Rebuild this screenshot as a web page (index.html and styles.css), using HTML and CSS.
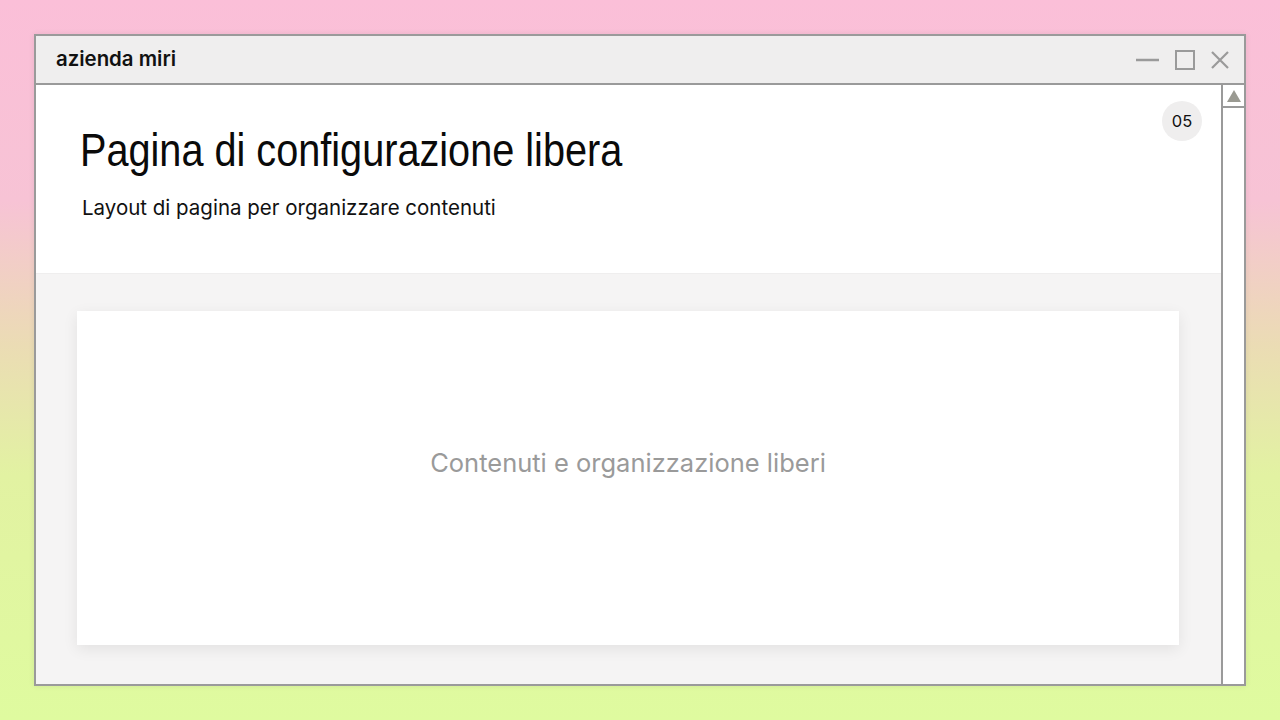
FILE: index.html
```html
<!DOCTYPE html>
<html lang="it">
<head>
<meta charset="utf-8">
<title>azienda miri</title>
<link rel="stylesheet" href="styles.css">
</head>
<body>
<div class="stage">
  <div class="window">
    <div class="titlebar">
      <span class="app-name">azienda miri</span>
      <div class="controls">
        <svg class="ctl ctl-min" width="23" height="20" viewBox="0 0 23 20"><line x1="0" y1="10" x2="23" y2="10" stroke="#9a9a9a" stroke-width="2.5"/></svg>
        <svg class="ctl" width="20" height="20" viewBox="0 0 20 20"><rect x="1" y="1" width="18" height="18" fill="none" stroke="#9a9a9a" stroke-width="2"/></svg>
        <svg class="ctl" width="20" height="20" viewBox="0 0 20 20"><path d="M2 2 L18 18 M18 2 L2 18" stroke="#9a9a9a" stroke-width="2.2"/></svg>
      </div>
    </div>
    <div class="body">
      <div class="content">
        <header class="page-head">
          <h1 class="title">Pagina di configurazione libera</h1>
          <p class="subtitle">Layout di pagina per organizzare contenuti</p>
          <span class="badge">05</span>
        </header>
        <section class="area">
          <div class="card">
            <span class="placeholder">Contenuti e organizzazione liberi</span>
          </div>
        </section>
      </div>
      <div class="scrollbar">
        <div class="scroll-btn">
          <svg width="16" height="14" viewBox="0 0 16 14"><polygon points="8,1 15,13 1,13" fill="#9a9a92"/></svg>
        </div>
      </div>
    </div>
  </div>
</div>
</body>
</html>
```
FILE: styles.css
```css
* { box-sizing: border-box; }
html, body { margin: 0; padding: 0; }
body {
  width: 1280px;
  height: 720px;
  overflow: hidden;
  font-family: "Inter", "Noto Sans", sans-serif;
}
.stage {
  width: 1280px;
  height: 720px;
  padding: 34px 34px 0 34px;
  background: linear-gradient(180deg, #fbbfd8 0%, #f7c3d5 28%, #ebdcb4 48%, #e2f2a2 66%, #dffb9f 100%);
}
.window {
  width: 1212px;
  height: 652px;
  border: 2px solid #9a9a9a;
  background: #fff;
  display: flex;
  flex-direction: column;
  box-shadow: 0 0 6px rgba(0,0,0,0.08);
}
.titlebar {
  height: 49px;
  flex: none;
  background: #efeeee;
  border-bottom: 2px solid #9a9a9a;
  display: flex;
  align-items: center;
  justify-content: space-between;
  padding: 0 14px 0 20px;
}
.app-name {
  font-family: "Inter", "Noto Sans", sans-serif;
  font-size: 20.4px;
  font-weight: 600;
  color: #111;
  margin-top: -3px;
}
.controls {
  display: flex;
  align-items: center;
  gap: 15px;
}
.ctl { display: block; }
.ctl-min { margin-right: 1px; }
.body {
  flex: 1;
  display: flex;
  min-height: 0;
}
.content {
  flex: 1;
  display: flex;
  flex-direction: column;
  min-width: 0;
}
.page-head {
  position: relative;
  height: 189px;
  flex: none;
  padding: 38px 0 0 44px;
  background: #fff;
  border-bottom: 1px solid #efeeee;
}
.title {
  margin: 0;
  font-family: "Liberation Sans", "Arial", sans-serif;
  font-weight: 400;
  font-size: 46px;
  line-height: 54px;
  color: #0a0a0a;
  transform: scaleX(0.862);
  transform-origin: left center;
  white-space: nowrap;
}
.subtitle {
  margin: 18px 0 0 2px;
  font-family: "Inter", "Noto Sans", sans-serif;
  font-size: 20.5px;
  line-height: 25px;
  color: #111;
}
.badge {
  position: absolute;
  top: 16px;
  right: 19px;
  width: 40px;
  height: 40px;
  border-radius: 50%;
  background: #efeeee;
  display: flex;
  align-items: center;
  justify-content: center;
  font-family: "Inter", "Noto Sans", sans-serif;
  font-size: 16.5px;
  color: #111;
}
.area {
  flex: 1;
  background: #f5f4f4;
  padding: 37px 42px 39px 41px;
  display: flex;
}
.card {
  flex: 1;
  background: #fff;
  box-shadow: 0 4px 14px rgba(0,0,0,0.08);
  display: flex;
  align-items: center;
  justify-content: center;
  padding-bottom: 32px;
}
.placeholder {
  font-family: "Inter", "Noto Sans", sans-serif;
  font-size: 25.5px;
  color: #9a9a9a;
}
.scrollbar {
  width: 23px;
  flex: none;
  border-left: 2px solid #9a9a9a;
  background: #fff;
  margin-bottom: -2px;
  border-bottom: 2px solid #9a9a9a;
}
.scroll-btn {
  height: 23px;
  border-bottom: 2px solid #9a9a9a;
  display: flex;
  align-items: center;
  justify-content: center;
}
.scroll-btn svg { display: block; }
```
